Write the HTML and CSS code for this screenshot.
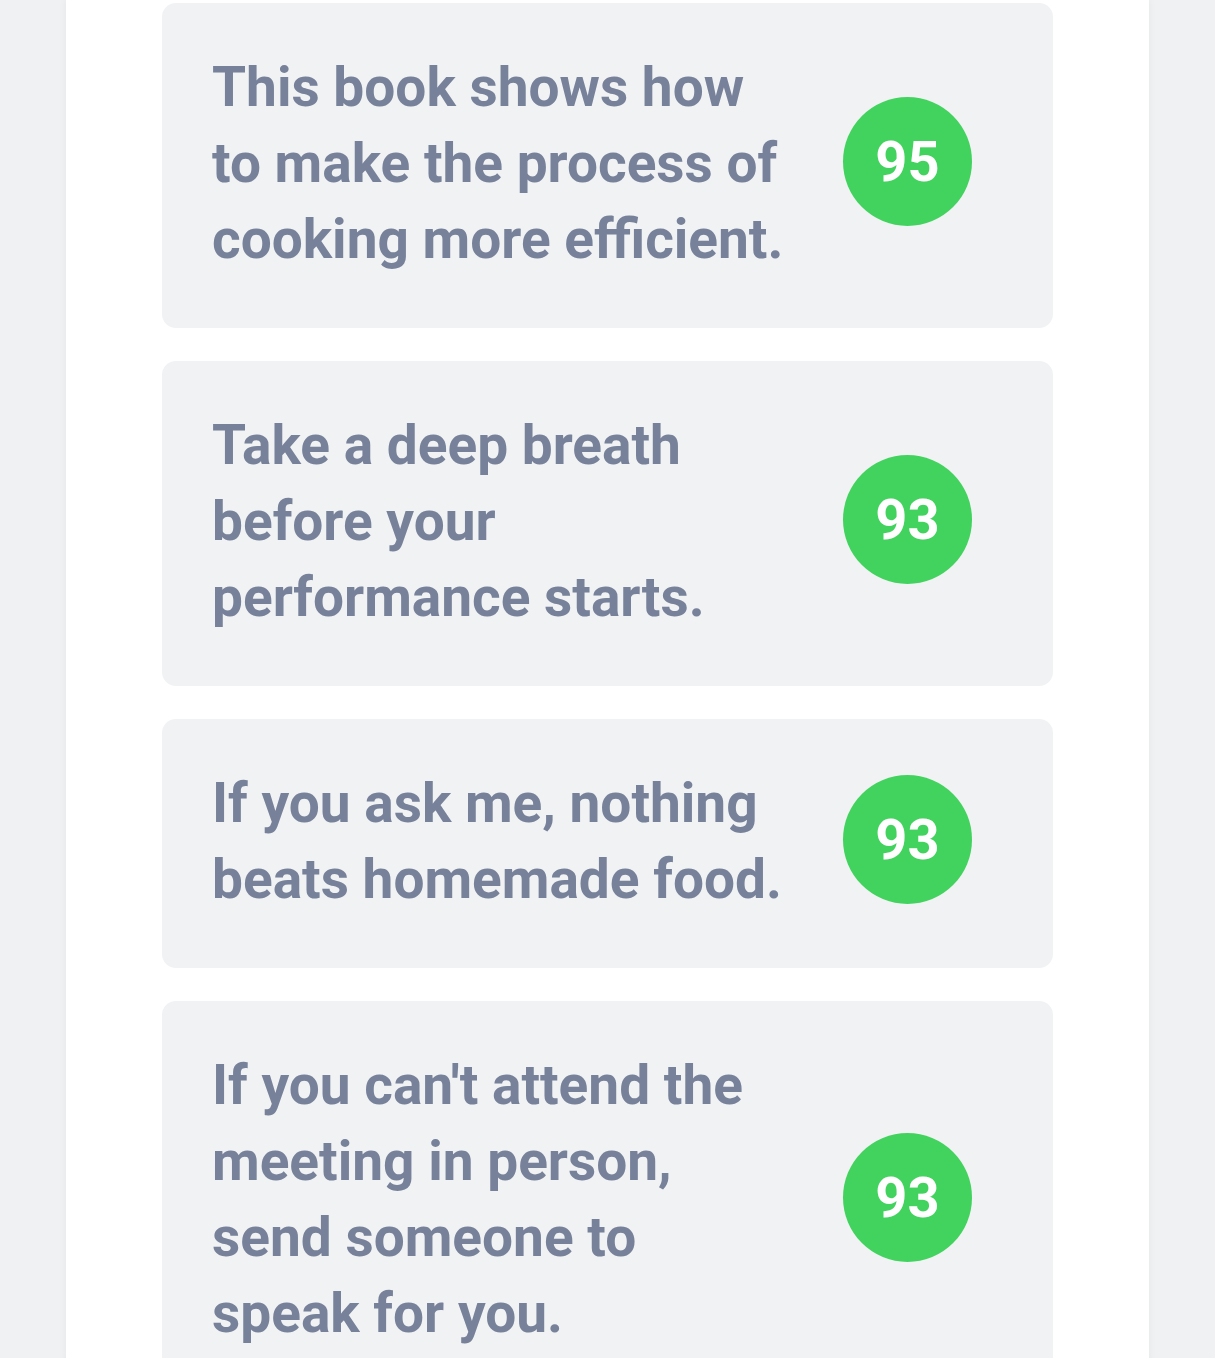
FILE: index.html
```html
<!DOCTYPE html>
<html lang="en">
<head>
<meta charset="utf-8">
<title>Sentences</title>
<link rel="stylesheet" href="styles.css">
</head>
<body>
<main class="column">
  <ul class="list">
    <li class="card">
      <p class="text">This book shows how to make the process of cooking more efficient.</p>
      <span class="score">95</span>
    </li>
    <li class="card">
      <p class="text">Take a deep breath before your performance starts.</p>
      <span class="score">93</span>
    </li>
    <li class="card">
      <p class="text">If you ask me, nothing beats homemade food.</p>
      <span class="score">93</span>
    </li>
    <li class="card">
      <p class="text">If you can't attend the meeting in person, send someone to speak for you.</p>
      <span class="score">93</span>
    </li>
  </ul>
</main>
</body>
</html>
```

FILE: styles.css
```css
html, body {
  margin: 0;
  padding: 0;
  background: #f0f1f3;
  height: 100%;
  overflow: hidden;
}
body {
  font-family: Roboto, "Liberation Sans", sans-serif;
}
.column {
  width: 1083px;
  margin-left: 66px;
  background: #ffffff;
  min-height: 100%;
  box-shadow: 0 0 8px rgba(0, 0, 0, 0.05);
  padding: 3px 96px 0;
  box-sizing: border-box;
}
.list {
  list-style: none;
  margin: 0;
  padding: 0;
  display: flex;
  flex-direction: column;
  gap: 33px;
}
.card {
  display: flex;
  align-items: center;
  gap: 53px;
  background: #f1f2f4;
  border-radius: 14px;
  padding: 46px 81px 51px 50px;
}
.text {
  flex: 0 0 578px;
  margin: 0;
  font-size: 55px;
  line-height: 76px;
  font-weight: 700;
  color: #77829a;
}
.score {
  flex: none;
  width: 129px;
  height: 129px;
  margin-bottom: 3px;
  border-radius: 50%;
  background: #42d35e;
  color: #ffffff;
  font-size: 56px;
  font-weight: 700;
  display: flex;
  align-items: center;
  justify-content: center;
}
```
